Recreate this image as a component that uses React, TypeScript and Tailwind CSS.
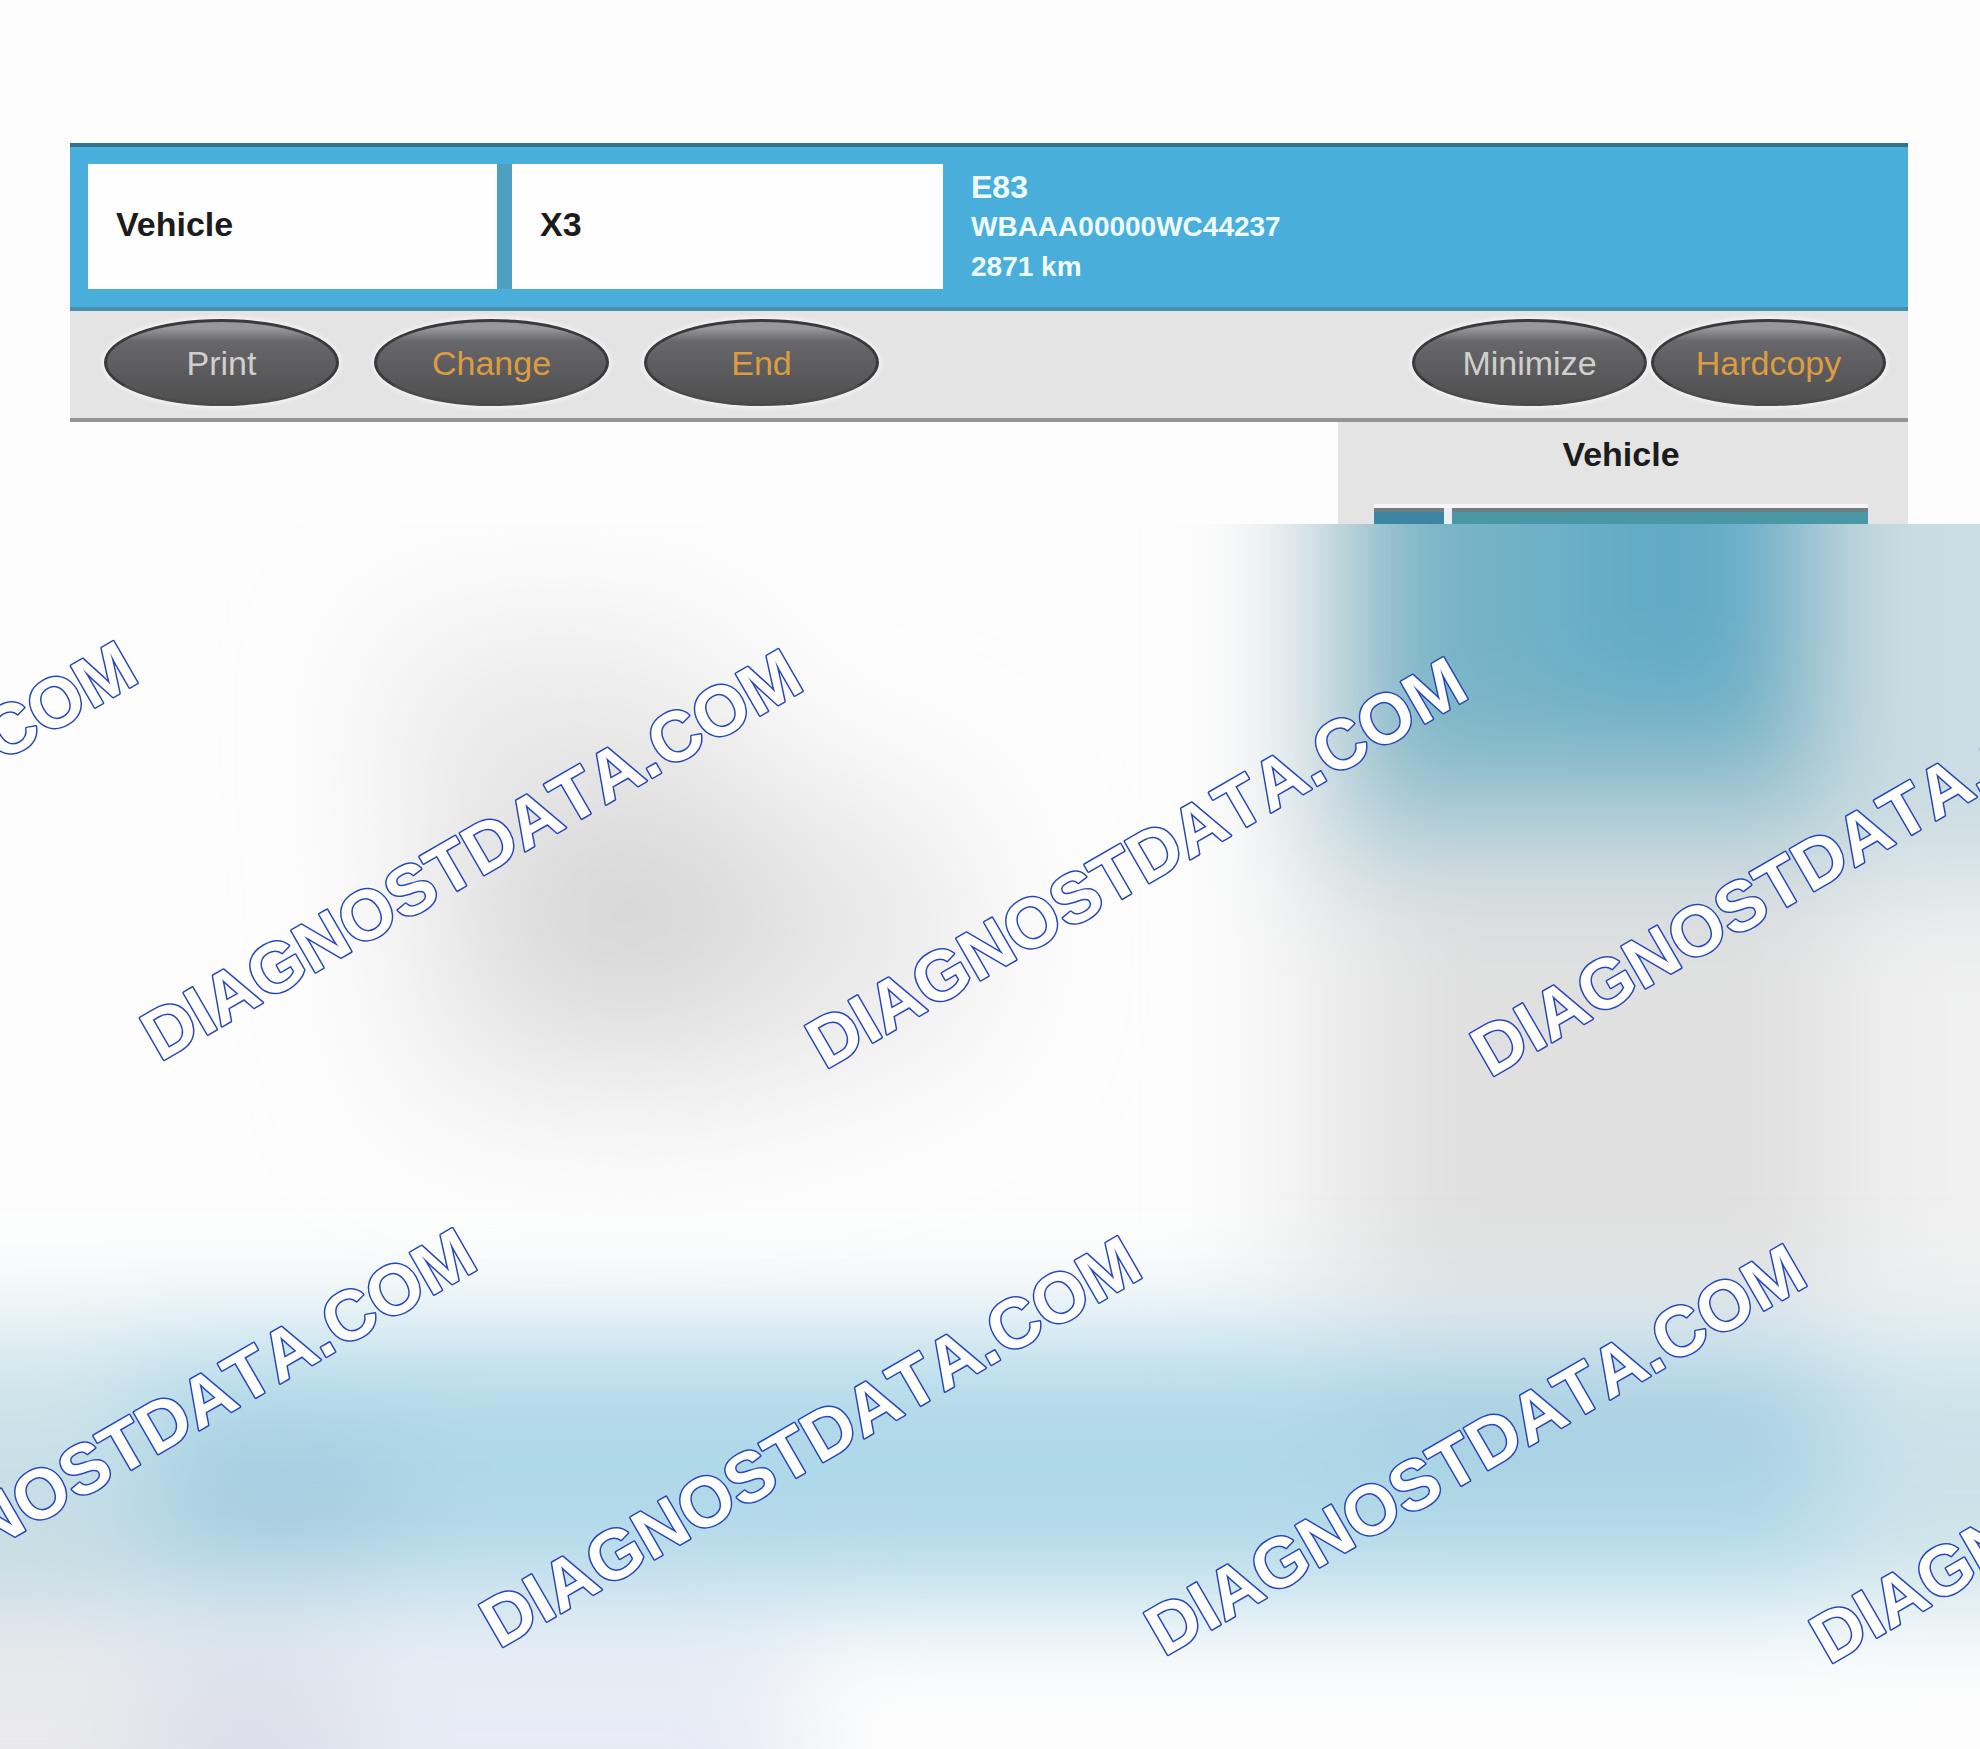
import clsx from "clsx";

const leftActions = [
  { label: "Print" },
  { label: "Change", highlight: true },
  { label: "End", highlight: true },
];

const rightActions = [
  { label: "Minimize" },
  { label: "Hardcopy", highlight: true },
];

// baseline start of every stamp, relative to the top of the preview
const stamps = [
  { x: -505, y: 530 },
  { x: 160, y: 538 },
  { x: 825, y: 546 },
  { x: 1490, y: 554 },
  { x: -166, y: 1117 },
  { x: 499, y: 1125 },
  { x: 1164, y: 1133 },
  { x: 1829, y: 1141 },
];

const ActionButton = ({ label, highlight }: { label: string; highlight?: boolean }) => (
  <button
    type="button"
    className={clsx(
      "h-[87px] w-[235px] rounded-[50%] border-[3px] border-[#3a3a3c] border-b-[#4b4b4b] bg-linear-to-b from-[#98979a] from-8% via-[#67676c] via-24% to-[#4f4f4f] text-[34px] leading-10 shadow-[0_0_4px_2px_#f6f5f6]",
      highlight ? "text-[#dc9c40]" : "text-[#cfcfcd]"
    )}
  >
    {label}
  </button>
);

const HeaderField = ({ text, className }: { text: string; className: string }) => (
  <div className={clsx("flex items-center bg-[#fefefe] px-7 pb-1 text-[34px] font-bold text-[#1c1c1c]", className)}>
    {text}
  </div>
);

const Backdrop = () => (
  <svg className="absolute inset-0 h-full w-full" viewBox="0 0 1980 1225" preserveAspectRatio="none" aria-hidden="true">
    <defs>
      <filter id="soft" x="-50%" y="-50%" width="200%" height="200%">
        <feGaussianBlur stdDeviation="55" />
      </filter>
      <filter id="softer" x="-50%" y="-50%" width="200%" height="200%">
        <feGaussianBlur stdDeviation="75" />
      </filter>
    </defs>
    <rect width="1980" height="1225" fill="#fdfdfd" />

    <g filter="url(#softer)">
      <path d="M390 110 L700 110 L760 240 L960 290 L980 500 L700 590 L420 570 Z" fill="#e8e8e8" />
      <ellipse cx="630" cy="390" rx="140" ry="90" fill="#d2d2d2" />
    </g>

    <g filter="url(#soft)">
      <rect x="1260" y="-200" width="940" height="1000" fill="#f0f0f0" />
      <rect x="1370" y="340" width="470" height="460" fill="#e0e0e0" />
      <rect x="1310" y="-300" width="900" height="660" fill="#cbdde2" />
      <rect x="1340" y="-300" width="490" height="610" fill="#9dc4d0" />
      <rect x="1380" y="-300" width="430" height="540" fill="#76b3c6" />
      <rect x="1560" y="-300" width="220" height="480" fill="#62abc7" />
    </g>

    <g filter="url(#soft)">
      <rect x="-200" y="805" width="2400" height="275" fill="#cbe2e9" />
      <rect x="-200" y="980" width="340" height="110" fill="#c2d9e1" />
      <rect x="140" y="825" width="1690" height="240" fill="#afd8e8" />
      <rect x="170" y="930" width="220" height="110" fill="#a2cadd" />
      <rect x="1350" y="825" width="480" height="110" fill="#a5cee1" />
      <rect x="-200" y="1110" width="1000" height="300" fill="#e7ebf4" />
      <rect x="-200" y="1110" width="340" height="300" fill="#e9e9ec" />
      <rect x="150" y="1110" width="200" height="300" fill="#dbdfe8" />
    </g>
  </svg>
);

const Watermark = () => (
  <svg className="absolute inset-0 h-full w-full">
    {stamps.map((stamp) => (
      <text
        key={`${stamp.x}-${stamp.y}`}
        transform={`translate(${stamp.x} ${stamp.y}) rotate(-30)`}
        className="fill-white stroke-[#2747b8] stroke-[3px] text-[70px] font-bold [font-kerning:none] [paint-order:stroke]"
        strokeLinejoin="round"
      >
        DIAGNOSTDATA.COM
      </text>
    ))}
  </svg>
);

const App = () => {
  return (
    <div className="min-h-screen overflow-hidden bg-[#fdfdfd] pt-[143px] font-['Liberation_Sans',Arial,sans-serif]">
      <div className="mr-[72px] ml-[70px]">
        <header className="flex h-[168px] border-y-4 border-t-[#32708f] border-b-[#4b8fab] bg-[#49aeda] px-[18px] pt-[17px] pb-[18px]">
          <div className="flex gap-[15px] bg-[#4f9fc0]">
            <HeaderField text="Vehicle" className="w-[409px]" />
            <HeaderField text="X3" className="w-[431px]" />
          </div>
          <div className="flex flex-col justify-center pl-7 text-[28px] leading-10 font-bold text-[#eefbff]">
            <span className="text-[32px]">E83</span>
            <span>WBAAA00000WC44237</span>
            <span>2871 km</span>
          </div>
        </header>

        <nav className="flex justify-between border-b-4 border-[#959394] bg-[#e5e4e5] pt-2 pr-[22px] pb-3 pl-[34px]">
          <div className="flex gap-[35px]">
            {leftActions.map((action) => (
              <ActionButton key={action.label} {...action} />
            ))}
          </div>
          <div className="flex gap-1">
            {rightActions.map((action) => (
              <ActionButton key={action.label} {...action} />
            ))}
          </div>
        </nav>

        <section className="ml-auto flex h-[102px] w-[570px] flex-col justify-between bg-[#e4e4e4] pt-3 pr-10 pl-9">
          <h2 className="text-center text-[34px] leading-10 font-bold text-[#1c1c1c]">Vehicle</h2>
          <div className="flex h-5 gap-2 border-t-4 border-[#f8f4f6] bg-[#e9eef0]">
            <div className="w-[70px] border-t-4 border-[#6f7f86] bg-[#3d86a3]" />
            <div className="flex-1 border-t-4 border-[#6f7f86] bg-[#4a97a5]" />
          </div>
        </section>
      </div>

      <div className="relative h-[1225px] overflow-hidden">
        <Backdrop />
        <Watermark />
      </div>
    </div>
  );
};

export default App;
